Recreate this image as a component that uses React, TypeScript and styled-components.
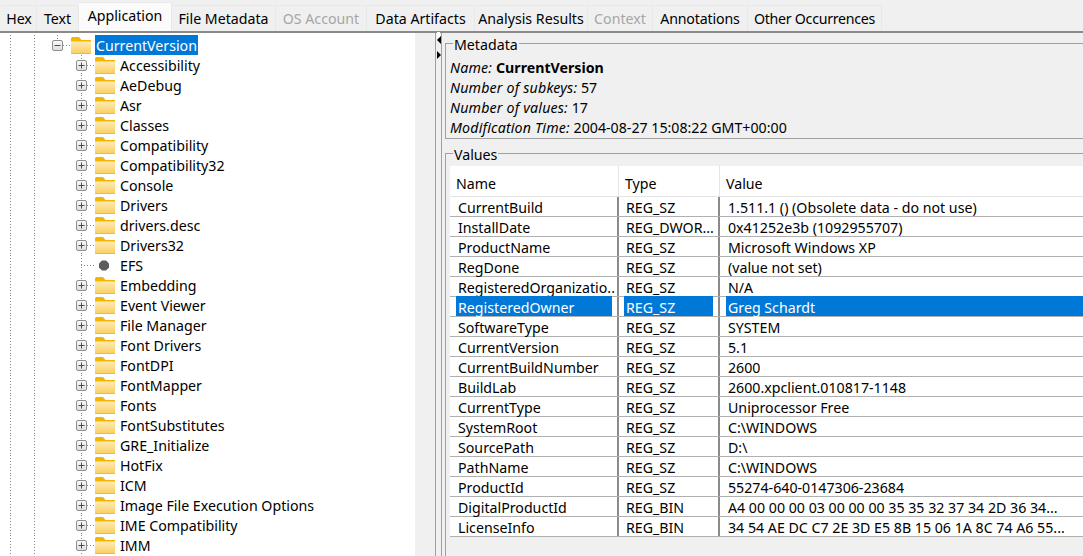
import styled, { createGlobalStyle } from 'styled-components'

const GlobalStyle = createGlobalStyle`
  html, body { margin: 0; padding: 0; background: #f0f0f0; }
  * { box-sizing: border-box; }
`

const tabs = [
  { label: 'Hex', width: 35 },
  { label: 'Text', width: 42 },
  { label: 'Application', width: 93, active: true },
  { label: 'File Metadata', width: 104 },
  { label: 'OS Account', width: 91, disabled: true },
  { label: 'Data Artifacts', width: 108 },
  { label: 'Analysis Results', width: 113 },
  { label: 'Context', width: 65, disabled: true },
  { label: 'Annotations', width: 95, tracking: -0.15 },
  { label: 'Other Occurrences', width: 134, tracking: -0.28 },
]

const treeItems = [
  'Accessibility', 'AeDebug', 'Asr', 'Classes', 'Compatibility', 'Compatibility32', 'Console',
  'Drivers', 'drivers.desc', 'Drivers32', 'EFS', 'Embedding', 'Event Viewer', 'File Manager',
  'Font Drivers', 'FontDPI', 'FontMapper', 'Fonts', 'FontSubstitutes', 'GRE_Initialize', 'HotFix',
  'ICM', 'Image File Execution Options', 'IME Compatibility', 'IMM',
]

const values = [
  ['CurrentBuild', 'REG_SZ', '1.511.1 () (Obsolete data - do not use)'],
  ['InstallDate', 'REG_DWOR...', '0x41252e3b (1092955707)'],
  ['ProductName', 'REG_SZ', 'Microsoft Windows XP'],
  ['RegDone', 'REG_SZ', '(value not set)'],
  ['RegisteredOrganizatio..', 'REG_SZ', 'N/A'],
  ['RegisteredOwner', 'REG_SZ', 'Greg Schardt'],
  ['SoftwareType', 'REG_SZ', 'SYSTEM'],
  ['CurrentVersion', 'REG_SZ', '5.1'],
  ['CurrentBuildNumber', 'REG_SZ', '2600'],
  ['BuildLab', 'REG_SZ', '2600.xpclient.010817-1148'],
  ['CurrentType', 'REG_SZ', 'Uniprocessor Free'],
  ['SystemRoot', 'REG_SZ', 'C:\\WINDOWS'],
  ['SourcePath', 'REG_SZ', 'D:\\'],
  ['PathName', 'REG_SZ', 'C:\\WINDOWS'],
  ['ProductId', 'REG_SZ', '55274-640-0147306-23684'],
  ['DigitalProductId', 'REG_BIN', 'A4 00 00 00 03 00 00 00 35 35 32 37 34 2D 36 34...'],
  ['LicenseInfo', 'REG_BIN', '34 54 AE DC C7 2E 3D E5 8B 15 06 1A 8C 74 A6 55...'],
]

const Page = styled.div`
  width: 1083px;
  height: 556px;
  overflow: hidden;
  display: flex;
  flex-direction: column;
  background: #f0f0f0;
  color: #000;
  font-family: 'Noto Sans', 'Liberation Sans', sans-serif;
  font-size: 14.2px;
`

const TabBar = styled.div`
  height: 33px;
  flex: none;
  display: flex;
  align-items: flex-end;
  padding-left: 2px;
  border-bottom: 2px solid #8a8a8a;
`

const Tab = styled.div<{ $active?: boolean; $disabled?: boolean; $width: number; $tracking?: number }>`
  width: ${p => p.$width}px;
  height: ${p => (p.$active ? 29 : 26)}px;
  flex: none;
  display: flex;
  justify-content: center;
  padding-top: 3px;
  line-height: 20px;
  white-space: nowrap;
  letter-spacing: ${p => p.$tracking ?? 0}px;
  background: ${p => (p.$active ? '#fbfbfb' : '#f0f0f0')};
  color: ${p => (p.$disabled ? '#a6a6a6' : '#000')};
  border: 1px solid #e8e8e8;
  border-left: none;
  border-bottom: none;
`

const Body = styled.div`
  flex: 1;
  min-height: 0;
  display: flex;
`

const TreePane = styled.div`
  width: 436px;
  flex: none;
  display: flex;
  background: #f0f0f0;
  border-right: 1px solid #a0a0a0;
`

const Tree = styled.div`
  width: 415px;
  flex: none;
  background: #fff;
  padding-top: 2px;
`

const TreeRow = styled.div`
  height: 20px;
  display: flex;
  align-items: center;
  white-space: nowrap;
`

const Guide = styled.div<{ $blank?: boolean }>`
  width: 24px;
  height: 20px;
  flex: none;
  background: ${p =>
    p.$blank
      ? 'none'
      : 'repeating-linear-gradient(to bottom, #888 0 1px, transparent 1px 3px) no-repeat 10px 0 / 1px 100%'};
`

const TreeExpander = styled.div<{ $last?: boolean }>`
  position: relative;
  width: 24px;
  height: 20px;
  flex: none;
  background:
    repeating-linear-gradient(to bottom, #888 0 1px, transparent 1px 3px) no-repeat 9px 0 / 1px ${p => (p.$last ? '50%' : '100%')},
    repeating-linear-gradient(to right, #888 0 1px, transparent 1px 3px) no-repeat 9px 10px / 14px 1px;
`

const ExpanderBox = styled.svg`
  position: absolute;
  left: 3px;
  top: 4px;
`

const NodeIcon = styled.svg`
  flex: none;
  margin-left: -1px;
`

const KeyLabel = styled.span<{ $selected?: boolean }>`
  height: 20px;
  line-height: 21px;
  padding: 0 1px;
  margin-left: 4px;
  background: ${p => (p.$selected ? '#0078d7' : 'transparent')};
  color: ${p => (p.$selected ? '#fff' : '#000')};
`

const RightPane = styled.div`
  flex: 1;
  min-width: 0;
  position: relative;
  border-left: 1px solid #a0a0a0;
  margin-left: 5px;
  padding: 2px 0 0 3px;
  display: flex;
  flex-direction: column;
`

const SplitArrows = styled.svg`
  position: absolute;
  left: -6px;
  top: -1px;
`

const Group = styled.fieldset<{ $grow?: boolean }>`
  margin: 0;
  min-width: 0;
  border: 1px solid #a0a0a0;
  border-right: none;
  ${p =>
    p.$grow
      ? 'padding: 5px 0 0; flex: 1; margin-top: 6px; border-bottom: none;'
      : 'padding: 7px 0 0; height: 104px; flex: none;'}
`

const GroupTitle = styled.legend`
  padding: 0 1px;
  margin-left: 7px;
  height: 16px;
  line-height: 20px;
`

const MetaLine = styled.div`
  height: 20px;
  line-height: 20px;
  padding-left: 4px;
  white-space: nowrap;
`

const MetaKey = styled.i`
  letter-spacing: 0.18px;
`

const MetaStrong = styled.b``

const Table = styled.div`
  margin-left: 4px;
  background: #fff;
  width: 640px;
`

const HeaderRow = styled.div`
  height: 31px;
  display: grid;
  grid-template-columns: 169px 101px 1fr;
  border-bottom: 1px solid #e5e5e5;
`

const HeaderCell = styled.div`
  padding-left: 6px;
  line-height: 35px;
  border-right: 1px solid #e5e5e5;
`

const Row = styled.div`
  height: 20px;
  display: grid;
  grid-template-columns: 169px 101px minmax(0, 1fr);
  border-bottom: 1px solid #b0b0b0;
`

const Cell = styled.div<{ $inset: number }>`
  padding-left: ${p => p.$inset}px;
  background: #fff;
  border-right: 2px solid #8a8a8a;
  white-space: nowrap;

  &:last-child {
    border-right: none;
  }
`

const CellText = styled.div<{ $selected?: boolean; $gapRight: number }>`
  height: 19px;
  line-height: 21px;
  padding-left: 2px;
  margin-right: ${p => p.$gapRight}px;
  background: ${p => (p.$selected ? '#0078d7' : 'transparent')};
  box-shadow: ${p => (p.$selected ? '0 -1px 0 #0078d7' : 'none')};
  color: ${p => (p.$selected ? '#fff' : '#000')};
`

const Folder = () => (
  <NodeIcon width="20" height="17" viewBox="0 0 20 17">
    <defs>
      <linearGradient id="folderFill" x1="0" y1="0" x2="0" y2="1">
        <stop offset="0" stopColor="#fdebb6" />
        <stop offset="1" stopColor="#fad063" />
      </linearGradient>
    </defs>
    <path d="M0 5V1.2L1 0h7l2.5 3H20v2z" fill="#f5b400" />
    <path d="M0 4h20v13H0z" fill="#f3b73a" />
    <path d="M0 4.5h20V16H0z" fill="url(#folderFill)" />
  </NodeIcon>
)

const Expander = ({ open }: { open?: boolean }) => (
  <ExpanderBox width="13" height="13" viewBox="0 0 13 13">
    <defs>
      <linearGradient id="boxFill" x1="0" y1="0" x2="0" y2="1">
        <stop offset="0" stopColor="#fafafa" />
        <stop offset="1" stopColor="#dcdce4" />
      </linearGradient>
    </defs>
    <rect x="1.5" y="1.5" width="10" height="10" rx="1.5" fill="url(#boxFill)" stroke="#8f8f8f" />
    <path d={open ? 'M3.5 6.5h6' : 'M3.5 6.5h6M6.5 3.5v6'} stroke="#3e4c86" strokeWidth="1" />
  </ExpanderBox>
)

const App = () => (
  <Page>
    <GlobalStyle />
    <TabBar>
      {tabs.map(t => (
        <Tab key={t.label} $width={t.width} $active={t.active} $disabled={t.disabled} $tracking={t.tracking}>
          {t.label}
        </Tab>
      ))}
    </TabBar>
    <Body>
      <TreePane>
        <Tree>
          <TreeRow>
            <Guide />
            <Guide />
            <TreeExpander $last>
              <Expander open />
            </TreeExpander>
            <Folder />
            <KeyLabel $selected>CurrentVersion</KeyLabel>
          </TreeRow>
          {treeItems.map(name => (
            <TreeRow key={name}>
              <Guide />
              <Guide />
              <Guide $blank />
              <TreeExpander>{name !== 'EFS' && <Expander />}</TreeExpander>
              {name === 'EFS' ? (
                <NodeIcon width="20" height="17" viewBox="0 0 20 17">
                  <path d="M7 3.5h4l3 3v4l-3 3H7l-3-3v-4z" fill="#5c5c5c" />
                </NodeIcon>
              ) : (
                <Folder />
              )}
              <KeyLabel>{name}</KeyLabel>
            </TreeRow>
          ))}
        </Tree>
      </TreePane>
      <RightPane>
        <SplitArrows width="5" height="30" viewBox="0 0 5 30">
          <path d="M1 0h3v6H1z" fill="#fff" />
          <path d="M5 4v8L1 8zM1 19v8l4-4z" fill="#000" />
        </SplitArrows>
        <Group>
          <GroupTitle>Metadata</GroupTitle>
          <MetaLine>
            <MetaKey>Name: </MetaKey>
            <MetaStrong>CurrentVersion</MetaStrong>
          </MetaLine>
          <MetaLine>
            <MetaKey>Number of subkeys:</MetaKey> 57
          </MetaLine>
          <MetaLine>
            <MetaKey>Number of values:</MetaKey> 17
          </MetaLine>
          <MetaLine>
            <MetaKey>Modification Time:</MetaKey> 2004-08-27 15:08:22 GMT+00:00
          </MetaLine>
        </Group>
        <Group $grow>
          <GroupTitle>Values</GroupTitle>
          <Table>
            <HeaderRow>
              <HeaderCell>Name</HeaderCell>
              <HeaderCell>Type</HeaderCell>
              <HeaderCell>Value</HeaderCell>
            </HeaderRow>
            {values.map(row => {
              const selected = row[0] === 'RegisteredOwner'
              return (
                <Row key={row[0]}>
                  <Cell $inset={6}>
                    <CellText $selected={selected} $gapRight={5}>{row[0]}</CellText>
                  </Cell>
                  <Cell $inset={5}>
                    <CellText $selected={selected} $gapRight={5}>{row[1]}</CellText>
                  </Cell>
                  <Cell $inset={6}>
                    <CellText $selected={selected} $gapRight={0}>{row[2]}</CellText>
                  </Cell>
                </Row>
              )
            })}
          </Table>
        </Group>
      </RightPane>
    </Body>
  </Page>
)

export default App
